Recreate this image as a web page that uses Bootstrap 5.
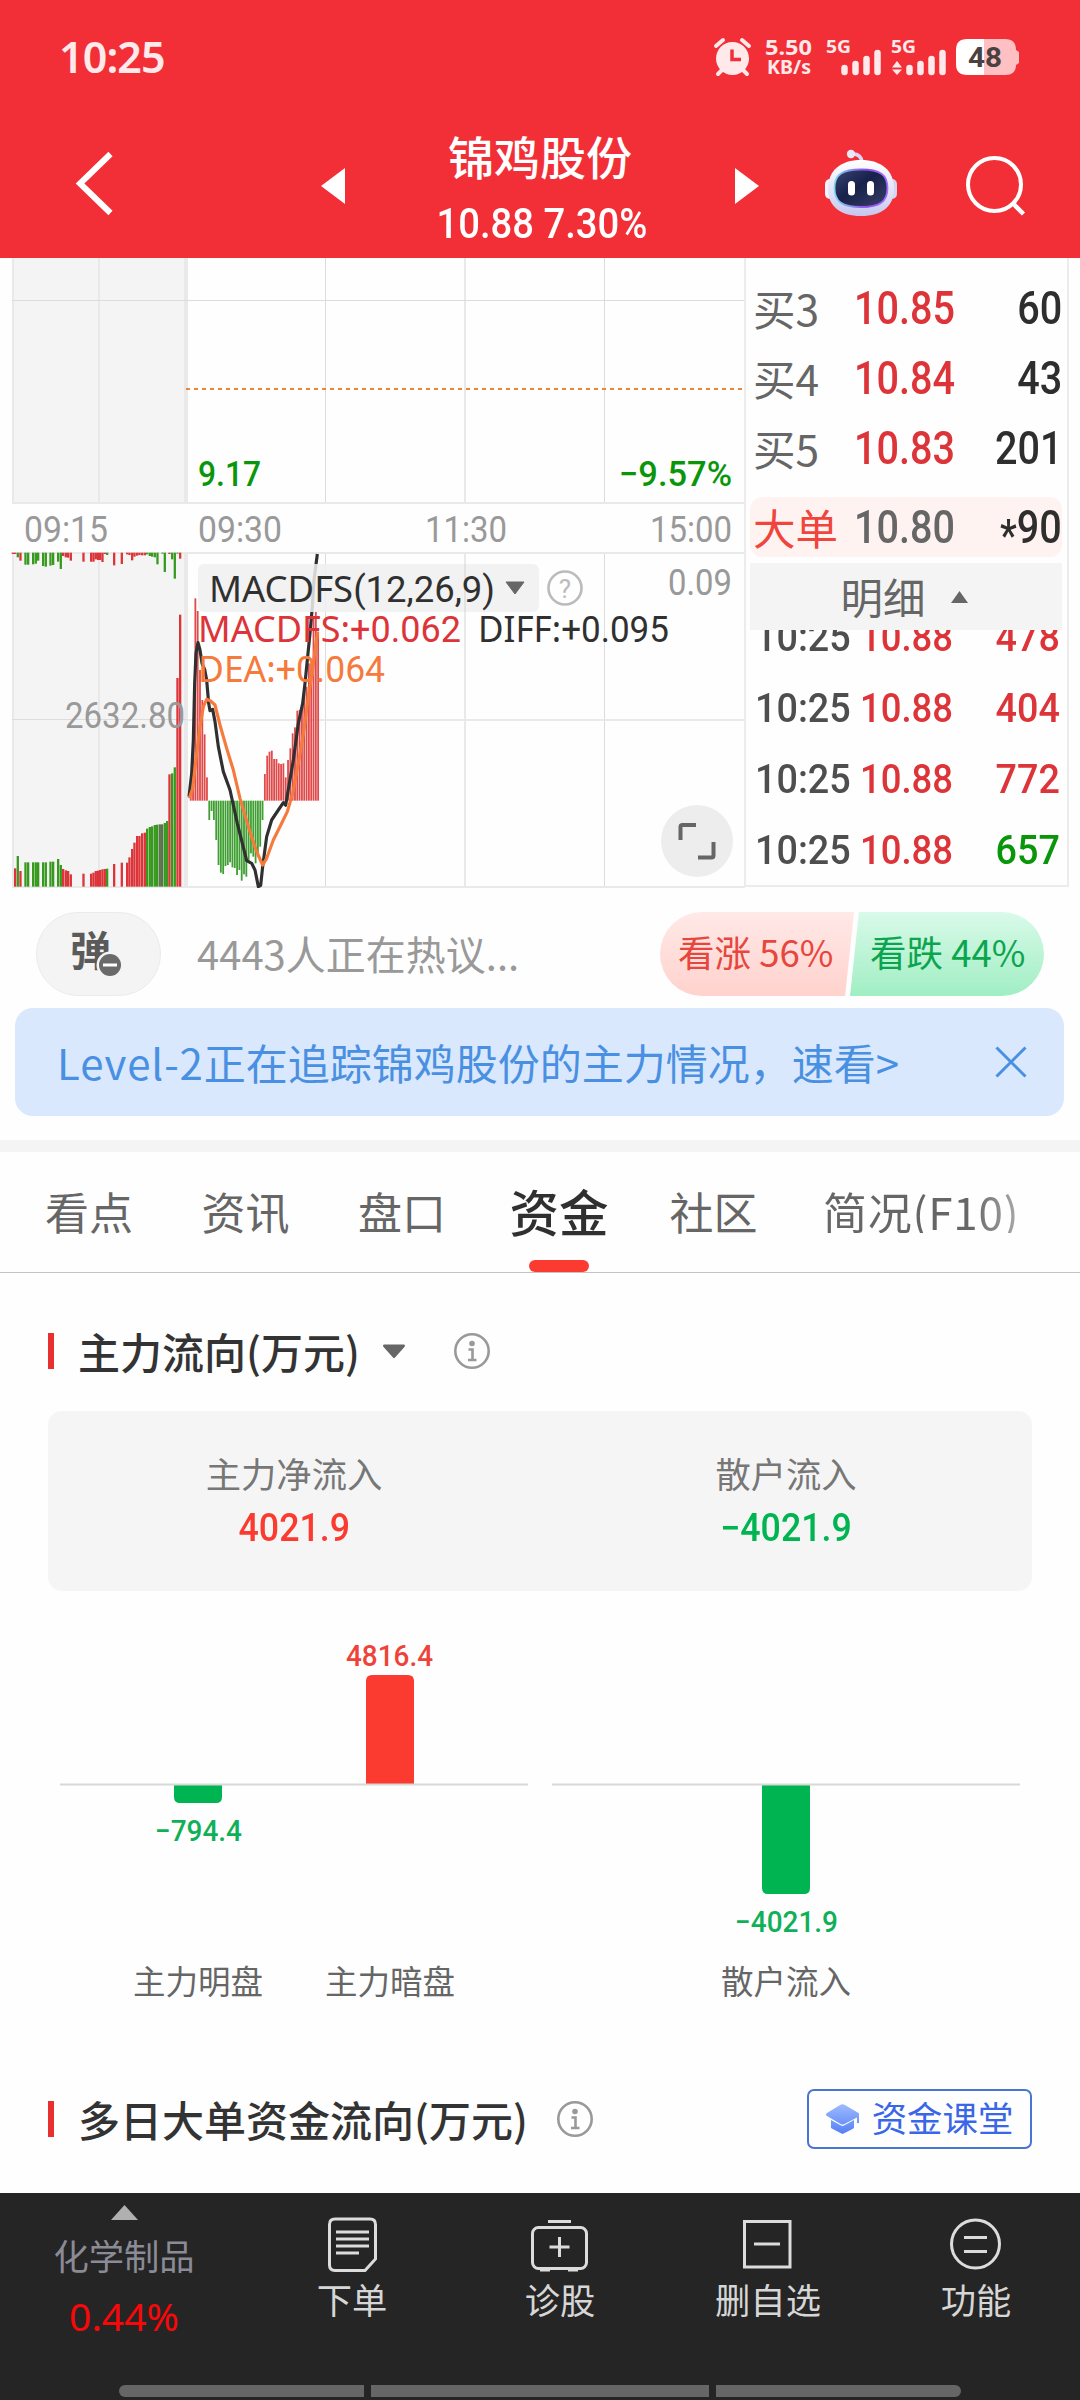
<!DOCTYPE html>
<html lang="zh-CN">
<head>
<meta charset="utf-8">
<meta name="viewport" content="width=device-width, initial-scale=1">
<title>锦鸡股份</title>
<link rel="stylesheet" href="https://cdn.jsdelivr.net/npm/bootstrap@5.3.0/dist/css/bootstrap.min.css">
<style>
body{width:1080px;height:2400px;overflow:hidden;background:#fefefe;color:#333;font-family:"Noto Sans CJK SC",sans-serif;line-height:1}
svg{display:block;flex:none}
.din{font-family:Roboto,"Noto Sans CJK SC",sans-serif;font-weight:500;display:inline-block;white-space:nowrap}
.top-red{background:#f22f37;height:258px}
.status-line{height:114px;padding:0 60px 0 59px}
.clock{font:600 43px/1 "Noto Sans",sans-serif;letter-spacing:-.9px;color:#ffe9ea;margin-top:-2px}
.title-line{height:144px}
.stock-name{font-size:46px;font-weight:500;height:46px;margin-left:-4px}
.stock-num{font-size:42px;transform:scaleX(.91);margin-top:25px}
.quote{height:630px}
.book{width:336px;height:629px;margin-left:-1px;border:solid #ececec;border-width:0 2px 2px 2px;overflow:hidden;margin-right:11px}
.ask-row{height:70px;padding:0 5px 0 7px;font-size:42.5px;color:#666}
.ask-row .lbl{width:101px;white-space:nowrap}
.ask-row .din{font-size:46px;transform:scaleX(.86)}
.ask-row .prc{width:120px;transform-origin:0 50%}
.ask-row .qty{margin-left:auto;transform-origin:100% 50%}
.star{position:relative;top:8px;font-size:44px}
.big-row{height:60px;margin:14px 5px 6px 4px;padding:0 0 0 3px;background:#fff3f2;border-radius:12px}
.detail-head{height:67px;margin:0 5px 0 4px;background:#f4f4f4;color:#666;font-size:42.5px;gap:25px;padding-right:4px}
.ticks{margin-top:-28px;clip-path:inset(28px 0 0 0)}
.tick-row{height:71px;padding:0 7px 0 9px}
.tick-row .din{font-size:41px;transform:scaleX(.92);transform-origin:0 50%}
.tick-row .tm{width:105px;color:#4e4e4e}
.tick-row .prc{transform:scaleX(.89)}
.tick-row .qty{margin-left:auto;transform-origin:100% 50%}
.up{color:#dc3438}.down{color:#0a960a}.ink{color:#2e2e2e}
.chat-line{padding:24px 36px 0}
.danmu{width:125px;height:84px;border-radius:42px;background:#f4f4f4;border:1px solid #ebebeb}
.chat-hint{font-size:40px;color:#999;margin:-3px 0 0 36px;white-space:nowrap}
.vote{height:84px;font-size:36.5px;white-space:nowrap}
.vote>div{padding-bottom:3px}
.vote-up{width:194px;border-radius:42px 0 0 42px;background:linear-gradient(#ffe9e7,#ffd2cd);color:#e8453c;clip-path:polygon(0 0,100% 0,95.4% 100%,0 100%);padding-left:18px}
.vote-dn{width:194px;margin-left:-4px;border-radius:0 42px 42px 0;background:linear-gradient(#d9fae9,#a0eec3);color:#0ca54f;clip-path:polygon(4.6% 0,100% 0,100% 100%,0 100%);padding-left:20px}
.notice{height:108px;margin:12px 16px 24px 15px;padding:0 37px 0 42px;border-radius:18px;background:#d9e8fc;color:#4a90e2;font-size:42px;white-space:nowrap}
.lat{letter-spacing:.9px}
.strip{height:12px;background:#f4f4f4}
.tab-line{height:121px;border-bottom:1px solid #c4c4c4;padding-left:45px;font-size:44px;color:#666;white-space:nowrap}
.tab-line>div{height:119px;margin-right:68.5px;padding-bottom:1px}
.tab-line .on{position:relative;font-size:49.5px;font-weight:500;color:#303030;margin-left:-5px;margin-right:61px}
.tab-line .on::after{content:"";position:absolute;left:50%;bottom:-1px;width:60px;height:12px;margin-left:-30px;border-radius:6px;background:#fb3b30}
.tab-line .tab-end{margin-left:-3px;letter-spacing:.8px}
.fade-end{background:linear-gradient(90deg,#666 75%,#aaa);-webkit-background-clip:text;background-clip:text;color:transparent}
.sec-head{padding:0 48px;height:60px;font-size:42px;font-weight:500;white-space:nowrap}
.sec-head::before{content:"";width:6px;height:36px;background:#e93030;margin-right:24px}
.sum-card{margin:30px 48px 0;height:180px;border-radius:14px;background:#f5f5f5;font-size:35.3px;color:#777}
.sum-card .din{font-size:38px;margin-top:19px;transform:scaleX(.94)}
.lesson{height:60px;width:225px;border:2px solid #4a74d4;border-radius:7px;color:#3a66e8;font-size:35.4px;font-weight:400;gap:13px}
.lesson span{margin-top:-4px}
.dock{height:207px;background:#252525;color:#d6d6d6;font-size:35.3px}
.dock .sector{width:248px;padding-top:12px}
.dock .act{width:208px;padding-top:21px}
.dock .act svg{margin-bottom:7px}
.home{height:12px;gap:7px;padding:0 119px}
.home i{background:#666;height:12px}
</style>
</head>
<body>
<header class="top-red text-white">
  <div class="status-line d-flex align-items-center justify-content-between">
    <div class="clock">10:25</div>
    <svg width="308" height="44" viewBox="713 35 308 44" fill="#ffe9ea" font-family="Noto Sans, sans-serif" font-weight="700">
      <circle cx="733.5" cy="58.500" r="16.500"/><path d="M717 46l7-6M750 46l-7-6M719 74l6-6M748 74l-6-6" stroke="#ffe9ea" stroke-width="4" stroke-linecap="round"/>
      <path d="M733 49.500V59.500H742" fill="none" stroke="#f22f37" stroke-width="3.500"/>
      <text x="766" y="55" font-size="22" textLength="47" lengthAdjust="spacingAndGlyphs">5.50</text>
      <text x="768" y="74" font-size="19" textLength="44" lengthAdjust="spacingAndGlyphs">KB/s</text>
      <text x="827" y="53" font-size="18.500" textLength="25" lengthAdjust="spacingAndGlyphs">5G</text>
      <text x="892" y="53" font-size="18.500" textLength="25" lengthAdjust="spacingAndGlyphs">5G</text>
      <path d="M845.500 68V72M856.500 64V72M867.500 59V72M878.500 53V72M910.500 68V72M921.500 64V72M932.500 59V72M943.500 53V72" stroke="#ffe9ea" stroke-width="6.500" stroke-linecap="round"/>
      <path d="M893 67.500L898 61l5 6.500zM893 69.500h10L898 75z"/>
      <path d="M985 39h21q11 0 11 11l3 2v11l-3 2q0 10-11 10H985z" fill="#ffc0c4"/><path d="M985 39h-17q-11 0-11 11v14q0 11 11 11h17z" fill="#fff"/>
      <text x="969" y="67" font-size="28" font-family="Roboto, sans-serif" fill="#4b4040" textLength="34" lengthAdjust="spacingAndGlyphs">48</text>
    </svg>
  </div>
  <nav class="title-line d-flex" aria-label="股票">
    <svg width="400" height="144" viewBox="0 114 400 144"><path d="M110.500 154L80 183.500l30.500 29.500" fill="none" stroke="#fff" stroke-width="6"/><path d="M321 186l24-18v36z" fill="#fff"/></svg>
    <div class="d-flex flex-column align-items-center" style="width:284px;padding-top:18px">
      <div class="stock-name">锦鸡股份</div>
      <div class="din stock-num">10.88 7.30%</div>
    </div>
    <svg width="396" height="144" viewBox="684 114 396 144">
      <defs>
        <linearGradient id="shell" x1="0" y1="0" x2="0" y2="1"><stop offset="0" stop-color="#fff"/><stop offset=".6" stop-color="#dfe0f8"/><stop offset="1" stop-color="#c6c6ee"/></linearGradient>
        <linearGradient id="visor" x1="0" y1="0" x2="1" y2="1"><stop offset="0" stop-color="#3a4572"/><stop offset=".45" stop-color="#17214a"/><stop offset="1" stop-color="#39406a"/></linearGradient>
        <linearGradient id="rim" x1="0" y1="0" x2="1" y2="0"><stop offset="0" stop-color="#7ed6f5"/><stop offset=".6" stop-color="#8b4be8"/><stop offset="1" stop-color="#a46bff"/></linearGradient>
      </defs>
      <path d="M735 168l24 18-24 18z" fill="#fff"/>
      <path d="M851 154q10-1 11 8" fill="none" stroke="#d9d9f6" stroke-width="3.500"/><circle cx="851" cy="154" r="4.200" fill="#e8e8fb"/>
      <rect x="825" y="179" width="10" height="20" rx="5" fill="#f3f3fd"/><rect x="887" y="179" width="10" height="20" rx="5" fill="#d5d5f3"/>
      <path d="M861 160c20 0 33 10 33 29 0 17-12 27-33 27s-33-10-33-27c0-19 13-29 33-29z" fill="url(#shell)"/>
      <path d="M861 169.500c19 0 26.500 5 26.500 18.500 0 14-8 19-26.500 19s-26.500-5-26.500-19c0-13.500 7.500-18.500 26.500-18.500z" fill="url(#visor)" stroke="url(#rim)" stroke-width="1.800"/>
      <path d="M851.500 184.500v7.500M870.500 184.500v7.500" stroke="#fff" stroke-width="7" stroke-linecap="round"/>
      <circle cx="994.500" cy="184.500" r="26.500" fill="none" stroke="#fff" stroke-width="4"/><path d="M1012.500 203l11 11" stroke="#fff" stroke-width="4.500"/>
    </svg>
  </nav>
</header>

<main>
<section class="quote d-flex">
  <svg id="chart" width="745" height="630" viewBox="0 258 745 630" font-family="Roboto, sans-serif" font-size="36.500" fill="#999">
    <rect x="12" y="258" width="175" height="246" fill="#f4f4f4"/><rect x="12" y="553" width="175" height="334" fill="#f4f4f4"/>
    <g stroke="#e9e9e9" stroke-width="2" fill="none">
      <path d="M13 258V504M99 258V504M13 553V888M99 553V888M465 258V504M465 553V888"/>
      <path d="M186 258V504M186 553V888" stroke-width="4"/>
      <path d="M325.500 258V504M604.500 258V504M325.500 553V888M604.500 553V888M12 300.500H745M12 719.500H187" stroke="#dcdcdc" stroke-width="1"/>
      <path d="M12 503H745M12 553H745M187 720H745M12 887H745"/>
    </g>
    <path d="M186 389H743" stroke="#e8873a" stroke-width="2" stroke-dasharray="4 4"/>
    <g id="vol"></g><g id="macd"></g>
    <g fill="none" stroke-linejoin="round" transform="translate(0 540) scale(.33333)">
      <path stroke="#303030" stroke-width="9.500" d="M567 770L575 700 580 600 584 430 588 340 594 308 600 330 606 370 614 388 620 420 626 490 630 512 638 508 645 545 655 620 670 695 690 750 712 850 740 962 755 970 765 990 775 1040 782 1036 788 980 800 890 815 840 835 810 850 788 857 796 863 760 880 660 895 550 908 490 915 430 922 360 930 280 937 200 942 120 952 42"/>
      <path stroke="#f57a3c" stroke-width="9.500" d="M568 775L578 745 590 640 600 560 610 500 620 478 632 483 645 495 660 555 680 625 700 690 720 775 745 860 770 935 788 975 800 955 820 900 845 850 862 815 878 760 895 670 912 570 925 470 938 390 945 330 953 275"/>
    </g>
    <text x="198" y="486" font-weight="500" font-size="35" fill="#0a960a" textLength="63" lengthAdjust="spacingAndGlyphs">9.17</text>
    <text x="619" y="486" font-weight="500" font-size="35" fill="#0a960a" textLength="113" lengthAdjust="spacingAndGlyphs">−9.57%</text>
    <text x="24" y="542" textLength="84" lengthAdjust="spacingAndGlyphs">09:15</text>
    <text x="198" y="542" textLength="84" lengthAdjust="spacingAndGlyphs">09:30</text>
    <text x="425" y="542" textLength="82" lengthAdjust="spacingAndGlyphs">11:30</text>
    <text x="650" y="542" textLength="82" lengthAdjust="spacingAndGlyphs">15:00</text>
    <text x="65" y="728" textLength="120" lengthAdjust="spacingAndGlyphs">2632.80</text>
    <text x="668" y="595" textLength="64" lengthAdjust="spacingAndGlyphs">0.09</text>
    <rect x="198" y="564" width="341" height="48" rx="6" fill="#f0f0f0" fill-opacity=".85"/><path d="M465 564v48" stroke="#e2e2e2" stroke-width="2"/>
    <text x="209" y="602" fill="#303030" textLength="286" lengthAdjust="spacingAndGlyphs"><tspan font-family="Noto Sans">MACDFS</tspan>(12,26,9)</text>
    <path d="M506 582h18l-9 12z" fill="#666" stroke="#666" stroke-linejoin="round"/>
    <circle cx="565" cy="588" r="16.500" fill="none" stroke="#bbb" stroke-width="2.600"/><text x="565" y="597.500" font-size="26" text-anchor="middle" fill="#bbb">?</text>
    <text x="198" y="641.500" fill="#dc3438" textLength="263" lengthAdjust="spacingAndGlyphs"><tspan font-family="Noto Sans">MACDFS:</tspan>+0.062</text>
    <text x="478" y="641.500" fill="#303030" textLength="191" lengthAdjust="spacingAndGlyphs"><tspan font-family="Noto Sans">DIFF:</tspan>+0.095</text>
    <text x="198" y="681.500" fill="#f57a3c" textLength="187" lengthAdjust="spacingAndGlyphs"><tspan font-family="Noto Sans">DEA:</tspan>+0.064</text>
    <circle cx="697" cy="841" r="36" fill="#ededed"/><path d="M680.500 840V827q0-2 2-2H696M698 857.500h13.500q2 0 2-2V842" fill="none" stroke="#666" stroke-width="4"/>
  </svg>
  <div class="book">
    <div style="height:15px"></div>
    <div class="ask-row d-flex align-items-center"><span class="lbl">买3</span><span class="din prc up">10.85</span><span class="din qty ink">60</span></div>
    <div class="ask-row d-flex align-items-center"><span class="lbl">买4</span><span class="din prc up">10.84</span><span class="din qty ink">43</span></div>
    <div class="ask-row d-flex align-items-center"><span class="lbl">买5</span><span class="din prc up">10.83</span><span class="din qty ink">201</span></div>
    <div class="ask-row big-row d-flex align-items-center"><span class="lbl" style="color:#f0453c">大单</span><span class="din prc">10.80</span><span class="din qty ink"><span class="star">*</span>90</span></div>
    <div class="detail-head d-flex align-items-center justify-content-center"><span>明细</span><svg width="17" height="12"><path d="M0 12L8.500 0 17 12z" fill="#666"/></svg></div>
    <div class="ticks">
      <div class="tick-row d-flex align-items-center"><span class="din tm">10:25</span><span class="din prc up">10.88</span><span class="din qty up">478</span></div>
      <div class="tick-row d-flex align-items-center"><span class="din tm">10:25</span><span class="din prc up">10.88</span><span class="din qty up">404</span></div>
      <div class="tick-row d-flex align-items-center"><span class="din tm">10:25</span><span class="din prc up">10.88</span><span class="din qty up">772</span></div>
      <div class="tick-row d-flex align-items-center"><span class="din tm">10:25</span><span class="din prc up">10.88</span><span class="din qty down">657</span></div>
    </div>
  </div>
</section>

<section class="chat-line d-flex align-items-center">
  <div class="danmu d-flex align-items-center justify-content-center"><svg width="60" height="60" viewBox="70 924 60 60"><text x="71" y="966" font-size="41" font-weight="700" fill="#5a5a5a">弹</text><circle cx="111" cy="965" r="13.500" fill="#f4f4f4"/><circle cx="111" cy="965" r="11" fill="#6a6a6a"/><path d="M104 965h14" stroke="#fff" stroke-width="3"/></svg></div>
  <div class="chat-hint">4443人正在热议...</div>
  <div class="vote d-flex ms-auto"><div class="vote-up d-flex align-items-center">看涨 56%</div><div class="vote-dn d-flex align-items-center">看跌 44%</div></div>
</section>
<div class="notice d-flex align-items-center justify-content-between"><span><span class="lat">Level-2</span>正在追踪锦鸡股份的主力情况，速看&gt;</span><svg width="32" height="32"><path d="M1.500 1.500l29 29M30.500 1.500l-29 29" stroke="#4a90e2" stroke-width="3"/></svg></div>
<div class="strip"></div>
<div class="tab-line d-flex">
  <div class="d-flex align-items-center">看点</div><div class="d-flex align-items-center">资讯</div><div class="d-flex align-items-center">盘口</div><div class="on d-flex align-items-center">资金</div><div class="d-flex align-items-center">社区</div><div class="tab-end d-flex align-items-center"><span class="fade-end">简况(F10)</span></div>
</div>

<section>
  <div style="height:48px"></div>
  <div class="sec-head d-flex align-items-center">主力流向(万元)
    <svg width="115" height="40" viewBox="380 1331 115 40" style="margin-left:19px"><path d="M385 1344.500h20q2 1 0 3l-9 10q-1 1-2 0l-9-10q-2-2 0-3z" fill="#666"/><g fill="none" stroke="#999" stroke-width="2.600"><circle cx="473" cy="1351" r="16.700"/><path d="M469.500 1349.500h4v9.500M469 1360h8.500"/></g><circle cx="473" cy="1343.500" r="2.800" fill="#999"/></svg>
  </div>
  <div class="sum-card d-flex">
    <div class="w-50 d-flex flex-column align-items-center" style="padding-top:44px">主力净流入<span class="din" style="color:#fb3b30">4021.9</span></div>
    <div class="w-50 d-flex flex-column align-items-center" style="padding-top:44px">散户流入<span class="din" style="color:#00b551">−4021.9</span></div>
  </div>
  <svg width="1080" height="498" viewBox="0 1591 1080 498" font-family="Roboto, sans-serif" font-weight="500" font-size="29.500">
    <path d="M366 1784v-103q0-6 6-6h36q6 0 6 6v103z" fill="#fb3b30"/>
    <path d="M174 1785h48v12q0 6-6 6h-36q-6 0-6-6zM762 1785h48v103q0 6-6 6h-36q-6 0-6-6z" fill="#00b551"/>
    <path d="M60 1784.500h468M552 1784.500h468" stroke="#d8d8d8" stroke-width="2"/>
    <text x="346" y="1666" fill="#ee4339" textLength="87" lengthAdjust="spacingAndGlyphs">4816.4</text>
    <g fill="#10b058"><text x="155" y="1841" textLength="87" lengthAdjust="spacingAndGlyphs">−794.4</text><text x="735" y="1932" textLength="103" lengthAdjust="spacingAndGlyphs">−4021.9</text></g>
    <g font-family="Noto Sans CJK SC, sans-serif" font-weight="400" font-size="32.500" fill="#666" text-anchor="middle"><text x="198" y="1994">主力明盘</text><text x="390" y="1994">主力暗盘</text><text x="786" y="1994">散户流入</text></g>
  </svg>
  <div class="sec-head d-flex align-items-center">多日大单资金流向(万元)
    <svg width="40" height="40" viewBox="453 1331 40 40" style="margin-left:27px"><g fill="none" stroke="#999" stroke-width="2.600"><circle cx="473" cy="1351" r="16.700"/><path d="M469.500 1349.500h4v9.500M469 1360h8.500"/></g><circle cx="473" cy="1343.500" r="2.800" fill="#999"/></svg>
    <div class="lesson d-flex align-items-center justify-content-center ms-auto"><svg width="33" height="31" viewBox="825 2104 33 31"><defs><linearGradient id="cap" x1="0" y1="0" x2="0" y2="1"><stop offset="0" stop-color="#9dbbff"/><stop offset="1" stop-color="#5580f5"/></linearGradient></defs><path d="M839.500 2104.700q2-1 4 0l14 8.300q1.500 1 1 3v7h-2.500v-5.500l-12.500 6.500q-2 1-4 0l-13.500-8q-2-1.500 0-3zM830 2120l10 5.500q1.500.8 3 0l10-5.500v8q-1 1-11.500 6-10-5-11.500-6z" fill="url(#cap)"/></svg><span>资金课堂</span></div>
  </div>
  <div style="height:44px"></div>
</section>
</main>

<footer class="dock">
  <div class="d-flex" style="height:192px">
    <div class="sector d-flex flex-column align-items-center"><svg width="27" height="15"><path d="M0 15L13.500 0 27 15z" fill="#b0b0b0"/></svg><span style="color:#8b8b97;margin-top:17px">化学制品</span><span style="color:#f80808;font:400 39px/1 'Noto Sans',sans-serif;margin-top:24px">0.44%</span></div>
    <div class="act d-flex flex-column align-items-center"><svg width="60" height="60" viewBox="322 2213 60 60" fill="none" stroke="#dcdcdc" stroke-width="3"><path d="M335 2218h35q5.500 0 5.500 5.500V2258L365 2269.500H335q-5.500 0-5.500-5.500V2223.500q0-5.500 5.500-5.500zM336 2231h33M336 2238h33M336 2245h33M336 2252h23"/></svg>下单</div>
    <div class="act d-flex flex-column align-items-center"><svg width="60" height="60" viewBox="530 2213 60 60" fill="none" stroke="#dcdcdc" stroke-width="3"><rect x="532.500" y="2226.500" width="54" height="41" rx="6"/><path d="M548 2220.500h23M559.500 2236v20M549.500 2246h20"/><path d="M540 2268.500h10M568 2268.500h10" stroke-width="4"/></svg>诊股</div>
    <div class="act d-flex flex-column align-items-center"><svg width="60" height="60" viewBox="738 2213 60 60" fill="none" stroke="#dcdcdc" stroke-width="3"><path d="M744.500 2220.500h45.500v45.500h-45.500zM754 2243h26"/></svg>删自选</div>
    <div class="act d-flex flex-column align-items-center"><svg width="60" height="60" viewBox="946 2213 60 60" fill="none" stroke="#dcdcdc" stroke-width="3"><circle cx="975.500" cy="2243" r="24"/><path d="M964 2236.500h23M964 2250.500h23"/></svg>功能</div>
  </div>
  <div class="home d-flex"><i class="rounded-start-pill" style="width:245px"></i><i style="width:338px"></i><i class="rounded-end-pill" style="width:245px"></i></div>
</footer>

<script>
// Bars are [x, y, colour] on a grid of one third of a pixel, measured from the top of the pane.
const R='#dc3438',G='#379a1f',K='#5c7350';
const vol=[[42,985,R],[50,948,G],[58,993,R],[73,967,G],[81,967,G],[96,967,G],[104,967,G],[111,967,G],[126,967,G],[134,967,G],[148,965,G],[156,965,G],[171,957,G],[179,975,G],[186,987,R],[194,991,R],[201,993,R],[209,1003,R],[247,1001,R],[270,1001,R],[277,998,R],[284,993,R],[291,992,R],[297,990,R],[304,988,R],[311,987,R],[318,986,G],[339,972,R],[362,968,R],[378,968,R],[385,952,R],[393,927,R],[400,908,R],[408,888,R],[415,888,R],[423,880,R],[431,878,R],[438,866,G],[446,861,G],[453,859,G],[461,855,G],[468,854,G],[476,853,K],[483,853,K],[491,849,G],[498,843,G],[505,703,R],[513,700,G],[521,682,G],[529,414,R],[537,224,R]];
const top_=[[35,42,R],[42,42,R],[50,52,G],[58,62,R],[73,74,G],[81,74,G],[96,73,G],[104,71,G],[111,62,G],[126,78,G],[134,80,G],[148,77,G],[156,75,G],[171,65,G],[179,87,G],[186,48,R],[194,52,R],[201,53,R],[209,62,R],[247,65,R],[270,65,R],[277,65,R],[284,58,R],[291,60,R],[297,60,R],[304,66,R],[311,42,R],[318,45,G],[339,76,R],[362,72,R],[378,43,R],[385,45,R],[393,61,R],[400,50,R],[408,47,R],[415,45,R],[423,46,R],[431,46,R],[438,43,G],[446,48,G],[453,50,G],[461,52,G],[469,73,G],[484,41,G],[491,96,G],[505,42,R],[513,58,G],[521,116,G],[529,41,G],[537,56,R]];
const macd=[760,640,175,213,390,480,583,712,840,813,840,900,975,998,1002,978,975,967,982,984,1005,990,1022,1003,1010,962,940,950,970,950,920,840,702,647,635,632,657,657,670,672,670,712,660,625,580,562,512,510,506,450,440,370,370,230,215,275];
const bar=(x,a,b,w,c)=>`<rect x="${x/3}" y="${540+Math.min(a,b)/3}" width="${w}" height="${Math.abs(a-b)/3}" fill="${c}"/>`;
document.getElementById('vol').innerHTML=vol.map(v=>bar(v[0],v[1],1040,2.3,v[2])).join('')+top_.map(v=>bar(v[0],38,v[1],2.3,v[2])).join('');
document.getElementById('macd').innerHTML=macd.map((v,i)=>bar(569.5+i*6.95,v,782,1.8,v<782?'#e04a4a':'#3f9f32')).join('');
</script>
<script src="https://cdn.jsdelivr.net/npm/bootstrap@5.3.0/dist/js/bootstrap.bundle.min.js"></script>
</body>
</html>
